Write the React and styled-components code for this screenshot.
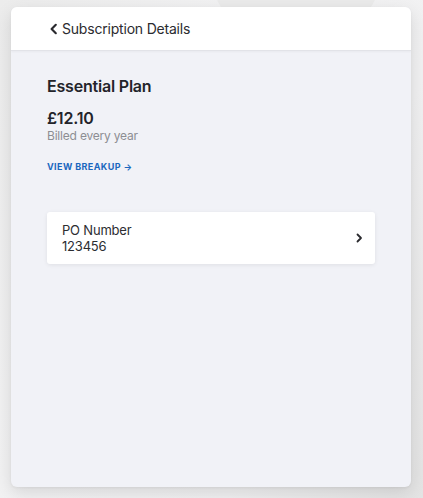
import React from "react";
import styled, { createGlobalStyle } from "styled-components";

const Global = createGlobalStyle`
  html, body { margin: 0; padding: 0; }
  body {
    width: 423px;
    height: 498px;
    overflow: hidden;
    background:
      radial-gradient(circle at 296px -40px, #ebebeb 0 88px, transparent 89px),
      linear-gradient(115deg, #ececec 0%, #f3f3f4 40%, #f1f1f2 70%, #e4e4e4 100%);
    font-family: Inter, "Noto Sans", "Liberation Sans", sans-serif;
    letter-spacing: -0.2px;
    -webkit-font-smoothing: antialiased;
  }
`;

const Page = styled.div`
  padding: 7px 12px 11px 11px;
  box-sizing: border-box;
  height: 498px;
`;

const Card = styled.div`
  height: 480px;
  width: 400px;
  border-radius: 6px;
  overflow: hidden;
  background: #f1f2f7;
  box-shadow: 0 6px 18px rgba(0, 0, 0, 0.12), 0 1px 3px rgba(0, 0, 0, 0.05);
  display: flex;
  flex-direction: column;
`;

const Header = styled.div`
  height: 44px;
  background: #ffffff;
  border-bottom: 1px solid #e2e3e8;
  box-shadow: 0 1px 2px rgba(0, 0, 0, 0.04);
  display: flex;
  align-items: center;
  padding-left: 37px;
  gap: 2px;
  box-sizing: border-box;
  font-size: 14px;
  color: #2b2b2f;
`;

const Body = styled.div`
  padding: 25px 36px 0 36px;
  display: flex;
  flex-direction: column;
`;

const PlanTitle = styled.div`
  font-size: 16px;
  font-weight: 600;
  color: #23242a;
  line-height: 20px;
`;

const Price = styled.div`
  margin-top: 12px;
  font-size: 16px;
  font-weight: 600;
  color: #23242a;
  line-height: 20px;
`;

const Billed = styled.div`
  font-size: 12px;
  color: #8d8e93;
  line-height: 15px;
`;

const Link = styled.a`
  margin-top: 18px;
  font-size: 9px;
  font-weight: 700;
  letter-spacing: 0.4px;
  color: #1b67be;
  line-height: 12px;
  text-decoration: none;
`;

const Row = styled.div`
  margin-top: 39px;
  background: #ffffff;
  border-radius: 3px;
  box-shadow: 0 1px 4px rgba(0, 0, 0, 0.08);
  height: 52px;
  box-sizing: border-box;
  padding: 0 11px 0 15px;
  display: flex;
  align-items: center;
  justify-content: space-between;
`;

const RowText = styled.div`
  font-size: 13px;
  color: #2c2d31;
  line-height: 16px;
`;

const Chevron = ({ dir = "right", size = 10 }) => (
  <svg width={size} height={size} viewBox="0 0 10 10" fill="none">
    <path
      d={dir === "right" ? "M3.5 1.5 L7 5 L3.5 8.5" : "M6.5 1.5 L3 5 L6.5 8.5"}
      stroke="#2a2a2e"
      strokeWidth="1.8"
      strokeLinecap="round"
      strokeLinejoin="round"
    />
  </svg>
);

export default function App() {
  return (
    <>
      <Global />
      <Page>
        <Card>
          <Header>
            <Chevron dir="left" size={12} />
            <span>Subscription Details</span>
          </Header>
          <Body>
            <PlanTitle>Essential Plan</PlanTitle>
            <Price>£12.10</Price>
            <Billed>Billed every year</Billed>
            <Link href="#">VIEW BREAKUP →</Link>
            <Row>
              <RowText>
                PO Number
                <br />
                123456
              </RowText>
              <Chevron dir="right" size={10} />
            </Row>
          </Body>
        </Card>
      </Page>
    </>
  );
}
